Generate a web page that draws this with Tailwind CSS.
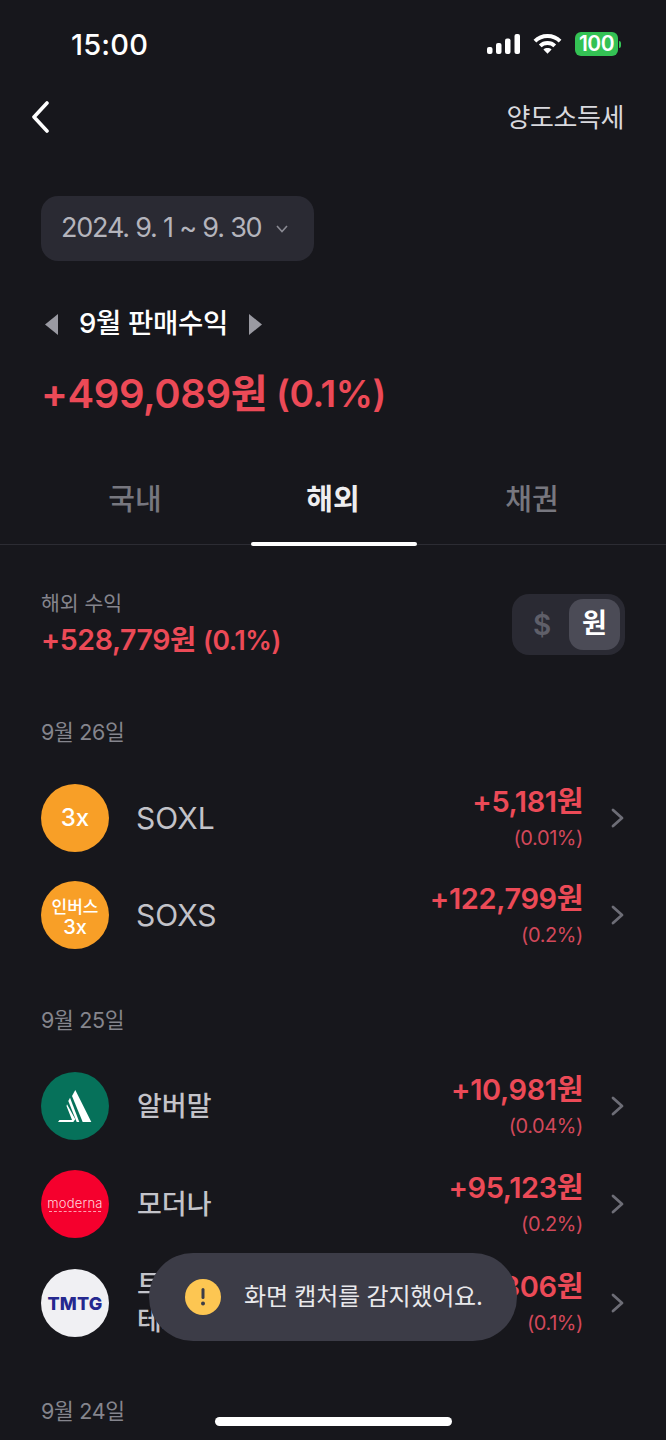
<!DOCTYPE html>
<html lang="ko">
<head>
  <meta charset="UTF-8" />
  <meta name="viewport" content="width=device-width, initial-scale=1.0" />
  <title>판매수익</title>
  <script src="https://cdn.jsdelivr.net/npm/@tailwindcss/browser@4"></script>
</head>
<body class="bg-[#17171c] font-['Inter','Noto_Sans_CJK_KR',sans-serif] text-[#c3c3c9]">
<div class="relative w-[666px] h-[1440px] overflow-hidden">

  <!-- 상태바 -->
  <div class="h-[88px] flex items-center justify-between pl-[71px] pr-[45px]">
    <span class="mt-[1px] text-[29px] font-medium text-white tracking-[0.2px]">15:00</span>
    <div class="flex items-center">
      <svg width="34" height="20" viewBox="0 0 34 20" fill="#fff"><rect x="0" y="13" width="5.500" height="7" rx="2"/><rect x="9" y="9" width="5.500" height="11" rx="2"/><rect x="18" y="4.500" width="5.500" height="15.500" rx="2"/><rect x="27.500" y="0" width="5.500" height="20" rx="2"/></svg>
      <svg class="ml-[12px]" width="29" height="22" viewBox="0 0 30 22" fill="none" stroke="#fff" stroke-width="4"><path d="M2 8 C9 1 21 1 28 8"/><path d="M7.500 13 C11.500 9 18.500 9 22.500 13"/><path d="M15 21 L10.800 16.600 C13 14.800 17 14.800 19.200 16.600 Z" fill="#fff" stroke="none"/></svg>
      <div class="ml-[13px] flex items-center">
        <div class="w-[43px] h-[24px] rounded-[6px] bg-[#34c254] text-white text-[21px] font-semibold flex items-center justify-center tracking-[-0.5px]">100</div>
        <div class="w-[2px] h-[7px] ml-[1px] rounded-r bg-[#34c254]"></div>
      </div>
    </div>
  </div>

  <!-- 상단 내비 -->
  <div class="h-[58px] flex items-center justify-between pl-[31px] pr-[42px]">
    <svg width="20" height="32" viewBox="0 0 20 32" fill="none" stroke="#fff" stroke-width="3.600" stroke-linecap="round" stroke-linejoin="round"><path d="M16 2 L3 16 L16 30"/></svg>
    <span class="text-[26px] text-[#d9d9de] tracking-[-0.4px]">양도소득세</span>
  </div>

  <!-- 기간 선택 -->
  <div class="mt-[50px] ml-[41px] w-[273px] h-[65px] rounded-[17px] bg-[#2a2a33] flex items-center pl-[20px]">
    <span class="text-[27px] text-[#b4b4bc] tracking-[-1.2px] whitespace-pre">2024. 9. 1 ~ 9. 30</span>
    <svg class="ml-[15px]" width="12" height="8" viewBox="0 0 12 8" fill="none" stroke="#8a8a93" stroke-width="1.600"><path d="M1 1 L6 6.500 L11 1"/></svg>
  </div>

  <!-- 월 수익 -->
  <div class="mt-[41px] ml-[45px] h-[44px] flex items-center">
    <svg width="13" height="21" viewBox="0 0 13 21" fill="#9a9aa2"><path d="M13 0 V21 L0 10.500 Z"/></svg>
    <span class="ml-[21px] text-[27.500px] font-medium text-white tracking-[-0.3px]">9월 판매수익</span>
    <svg class="ml-[21px]" width="13" height="21" viewBox="0 0 13 21" fill="#9a9aa2"><path d="M0 0 V21 L13 10.500 Z"/></svg>
  </div>
  <div class="mt-[20px] ml-[41px] h-[56px] flex items-center font-semibold text-[#ec4a57] tracking-[-0.4px]">
    <span class="text-[40px]">+499,089원</span><span class="ml-[9px] text-[37px]">(0.1%)</span>
  </div>

  <!-- 탭 -->
  <div class="mt-[44px] h-[79px] flex border-b border-[#2c2c33] relative">
    <div class="w-[268px] pl-[2px] flex items-center justify-center text-[29px] font-medium text-[#77777f] pb-[10px]">국내</div>
    <div class="w-[130px] flex items-center justify-center text-[29px] font-bold text-[#eeeef0] pb-[10px]">해외</div>
    <div class="w-[268px] flex items-center justify-center text-[29px] font-medium text-[#77777f] pb-[10px]">채권</div>
    <div class="absolute left-[251px] bottom-[-2px] w-[166px] h-[4px] rounded-full bg-white"></div>
  </div>

  <!-- 해외 수익 요약 -->
  <div class="mt-[50px] px-[41px] flex items-start justify-between">
    <div>
      <div class="text-[20.500px] text-[#85858d] leading-[26px] mt-[-4px]">해외 수익</div>
      <div class="font-semibold text-[#ec4a57] leading-[34px] mt-[6px] tracking-[-0.4px]"><span class="text-[28.500px]">+528,779원</span><span class="ml-[7px] text-[26.500px]">(0.1%)</span></div>
    </div>
    <div class="mt-[-1px] w-[113px] h-[61px] rounded-[17px] bg-[#2a2a33] flex items-center justify-between pl-[21px] pr-[5px]">
      <span class="text-[28px] font-semibold text-[#5f5f69]">$</span>
      <span class="w-[51px] h-[51px] rounded-[14px] bg-[#4b4b56] flex items-center justify-center text-[27px] font-bold text-white">원</span>
    </div>
  </div>

  <!-- 9월 26일 -->
  <div class="mt-[56px] ml-[41px] h-[30px] flex items-center text-[21.500px] text-[#85858d] tracking-[-0.3px]">9월 26일</div>
  <div class="mt-[37px] pl-[41px] pr-[42px]">
    <div class="h-[68px] flex items-center">
      <div class="w-[68px] h-[68px] rounded-full bg-[#f89f27] flex items-center justify-center text-white text-[24px] font-medium">3x</div>
      <span class="ml-[27px] text-[30px] text-[#c3c3c9]">SOXL</span>
      <div class="ml-auto text-right">
        <div class="text-[29px] font-semibold text-[#ec4a57] leading-[40px] tracking-[-0.4px]">+5,181원</div>
        <div class="text-[20px] text-[#d2485a] leading-[32px] tracking-[-0.4px]">(0.01%)</div>
      </div>
      <svg class="ml-[28px]" width="13" height="20" viewBox="0 0 13 20" fill="none" stroke="#6d6d76" stroke-width="2.800" stroke-linecap="round" stroke-linejoin="round"><path d="M2 2 L11 10 L2 18"/></svg>
    </div>
    <div class="mt-[29px] h-[68px] flex items-center">
      <div class="w-[68px] h-[68px] pt-[4px] rounded-full bg-[#f89f27] flex flex-col items-center justify-center text-white text-[17px] font-medium leading-[20px]"><span>인버스</span><span class="text-[20px]">3x</span></div>
      <span class="ml-[27px] text-[30px] text-[#c3c3c9]">SOXS</span>
      <div class="ml-auto text-right">
        <div class="text-[29px] font-semibold text-[#ec4a57] leading-[40px] tracking-[-0.4px]">+122,799원</div>
        <div class="text-[20px] text-[#d2485a] leading-[32px] tracking-[-0.4px]">(0.2%)</div>
      </div>
      <svg class="ml-[28px]" width="13" height="20" viewBox="0 0 13 20" fill="none" stroke="#6d6d76" stroke-width="2.800" stroke-linecap="round" stroke-linejoin="round"><path d="M2 2 L11 10 L2 18"/></svg>
    </div>
  </div>

  <!-- 9월 25일 -->
  <div class="mt-[56px] ml-[41px] h-[30px] flex items-center text-[21.500px] text-[#85858d] tracking-[-0.3px]">9월 25일</div>
  <div class="mt-[37px] pl-[41px] pr-[42px]">
    <div class="h-[68px] flex items-center">
      <div class="w-[68px] h-[68px] rounded-full bg-[#06715a] flex items-center justify-center">
        <svg class="mt-[-1px]" width="34" height="32" viewBox="0 0 34 32" fill="#fff"><path d="M17.300 0 L33.300 32 H24.700 L14 6 Z"/><path d="M12 7.700 L21.300 32 H18.700 L10.300 11 Z"/><path d="M9 14.300 L17.300 29.300 L15.300 32 H0 L1.500 30 H14 L8.500 16 Z"/></svg>
      </div>
      <span class="ml-[28px] mt-[2px] text-[27px] font-medium text-[#c3c3c9]">알버말</span>
      <div class="ml-auto text-right">
        <div class="text-[29px] font-semibold text-[#ec4a57] leading-[40px] tracking-[-0.4px]">+10,981원</div>
        <div class="text-[20px] text-[#d2485a] leading-[32px] tracking-[-0.4px]">(0.04%)</div>
      </div>
      <svg class="ml-[28px]" width="13" height="20" viewBox="0 0 13 20" fill="none" stroke="#6d6d76" stroke-width="2.800" stroke-linecap="round" stroke-linejoin="round"><path d="M2 2 L11 10 L2 18"/></svg>
    </div>
    <div class="mt-[30px] h-[68px] flex items-center">
      <div class="w-[68px] h-[68px] rounded-full bg-[#f5002d] flex flex-col items-center justify-center">
        <span class="text-[13px] font-light text-[#ffd5dc] leading-[14px] tracking-[0.2px]">moderna</span>
        <span class="w-[52px] h-0 mt-[1px] border-t border-dashed border-[#ff9fb0]"></span>
      </div>
      <span class="ml-[28px] mt-[2px] text-[27px] font-medium text-[#c3c3c9]">모더나</span>
      <div class="ml-auto text-right">
        <div class="text-[29px] font-semibold text-[#ec4a57] leading-[40px] tracking-[-0.4px]">+95,123원</div>
        <div class="text-[20px] text-[#d2485a] leading-[32px] tracking-[-0.4px]">(0.2%)</div>
      </div>
      <svg class="ml-[28px]" width="13" height="20" viewBox="0 0 13 20" fill="none" stroke="#6d6d76" stroke-width="2.800" stroke-linecap="round" stroke-linejoin="round"><path d="M2 2 L11 10 L2 18"/></svg>
    </div>
    <div class="mt-[31px] h-[68px] flex items-center">
      <div class="w-[68px] h-[68px] rounded-full bg-[#f0f0f3] flex items-center justify-center text-[#25288f] text-[18px] font-extrabold tracking-[0.2px]">TMTG</div>
      <div class="ml-[28px] text-[27px] font-medium text-[#c3c3c9] leading-[36px]"><div>트럼프 미디어</div><div>테크놀로지</div></div>
      <div class="ml-auto text-right">
        <div class="text-[29px] font-semibold text-[#ec4a57] leading-[40px] tracking-[-0.4px]">+43,306원</div>
        <div class="text-[20px] text-[#d2485a] leading-[32px] tracking-[-0.4px]">(0.1%)</div>
      </div>
      <svg class="ml-[28px]" width="13" height="20" viewBox="0 0 13 20" fill="none" stroke="#6d6d76" stroke-width="2.800" stroke-linecap="round" stroke-linejoin="round"><path d="M2 2 L11 10 L2 18"/></svg>
    </div>
  </div>

  <!-- 9월 24일 -->
  <div class="mt-[59px] ml-[41px] h-[30px] flex items-center text-[21.500px] text-[#85858d] tracking-[-0.3px]">9월 24일</div>

  <!-- 토스트 -->
  <div class="absolute left-[149px] top-[1253px] w-[368px] h-[88px] rounded-[44px] bg-[#3c3c47] flex items-center pl-[36px]">
    <div class="w-[36px] h-[36px] rounded-full bg-[#fdc652] flex items-center justify-center">
      <svg width="6" height="22" viewBox="0 0 6 22" fill="#3c3c47"><rect x="1.500" y="2" width="3" height="11" rx="1.500"/><circle cx="3" cy="17.500" r="2"/></svg>
    </div>
    <span class="ml-[23px] text-[24px] text-[#e9e9ec] tracking-[-0.2px]">화면 캡처를 감지했어요.</span>
  </div>

  <!-- 홈 인디케이터 -->
  <div class="absolute left-[215px] top-[1417px] w-[237px] h-[9px] rounded-full bg-white"></div>
</div>
</body>
</html>
